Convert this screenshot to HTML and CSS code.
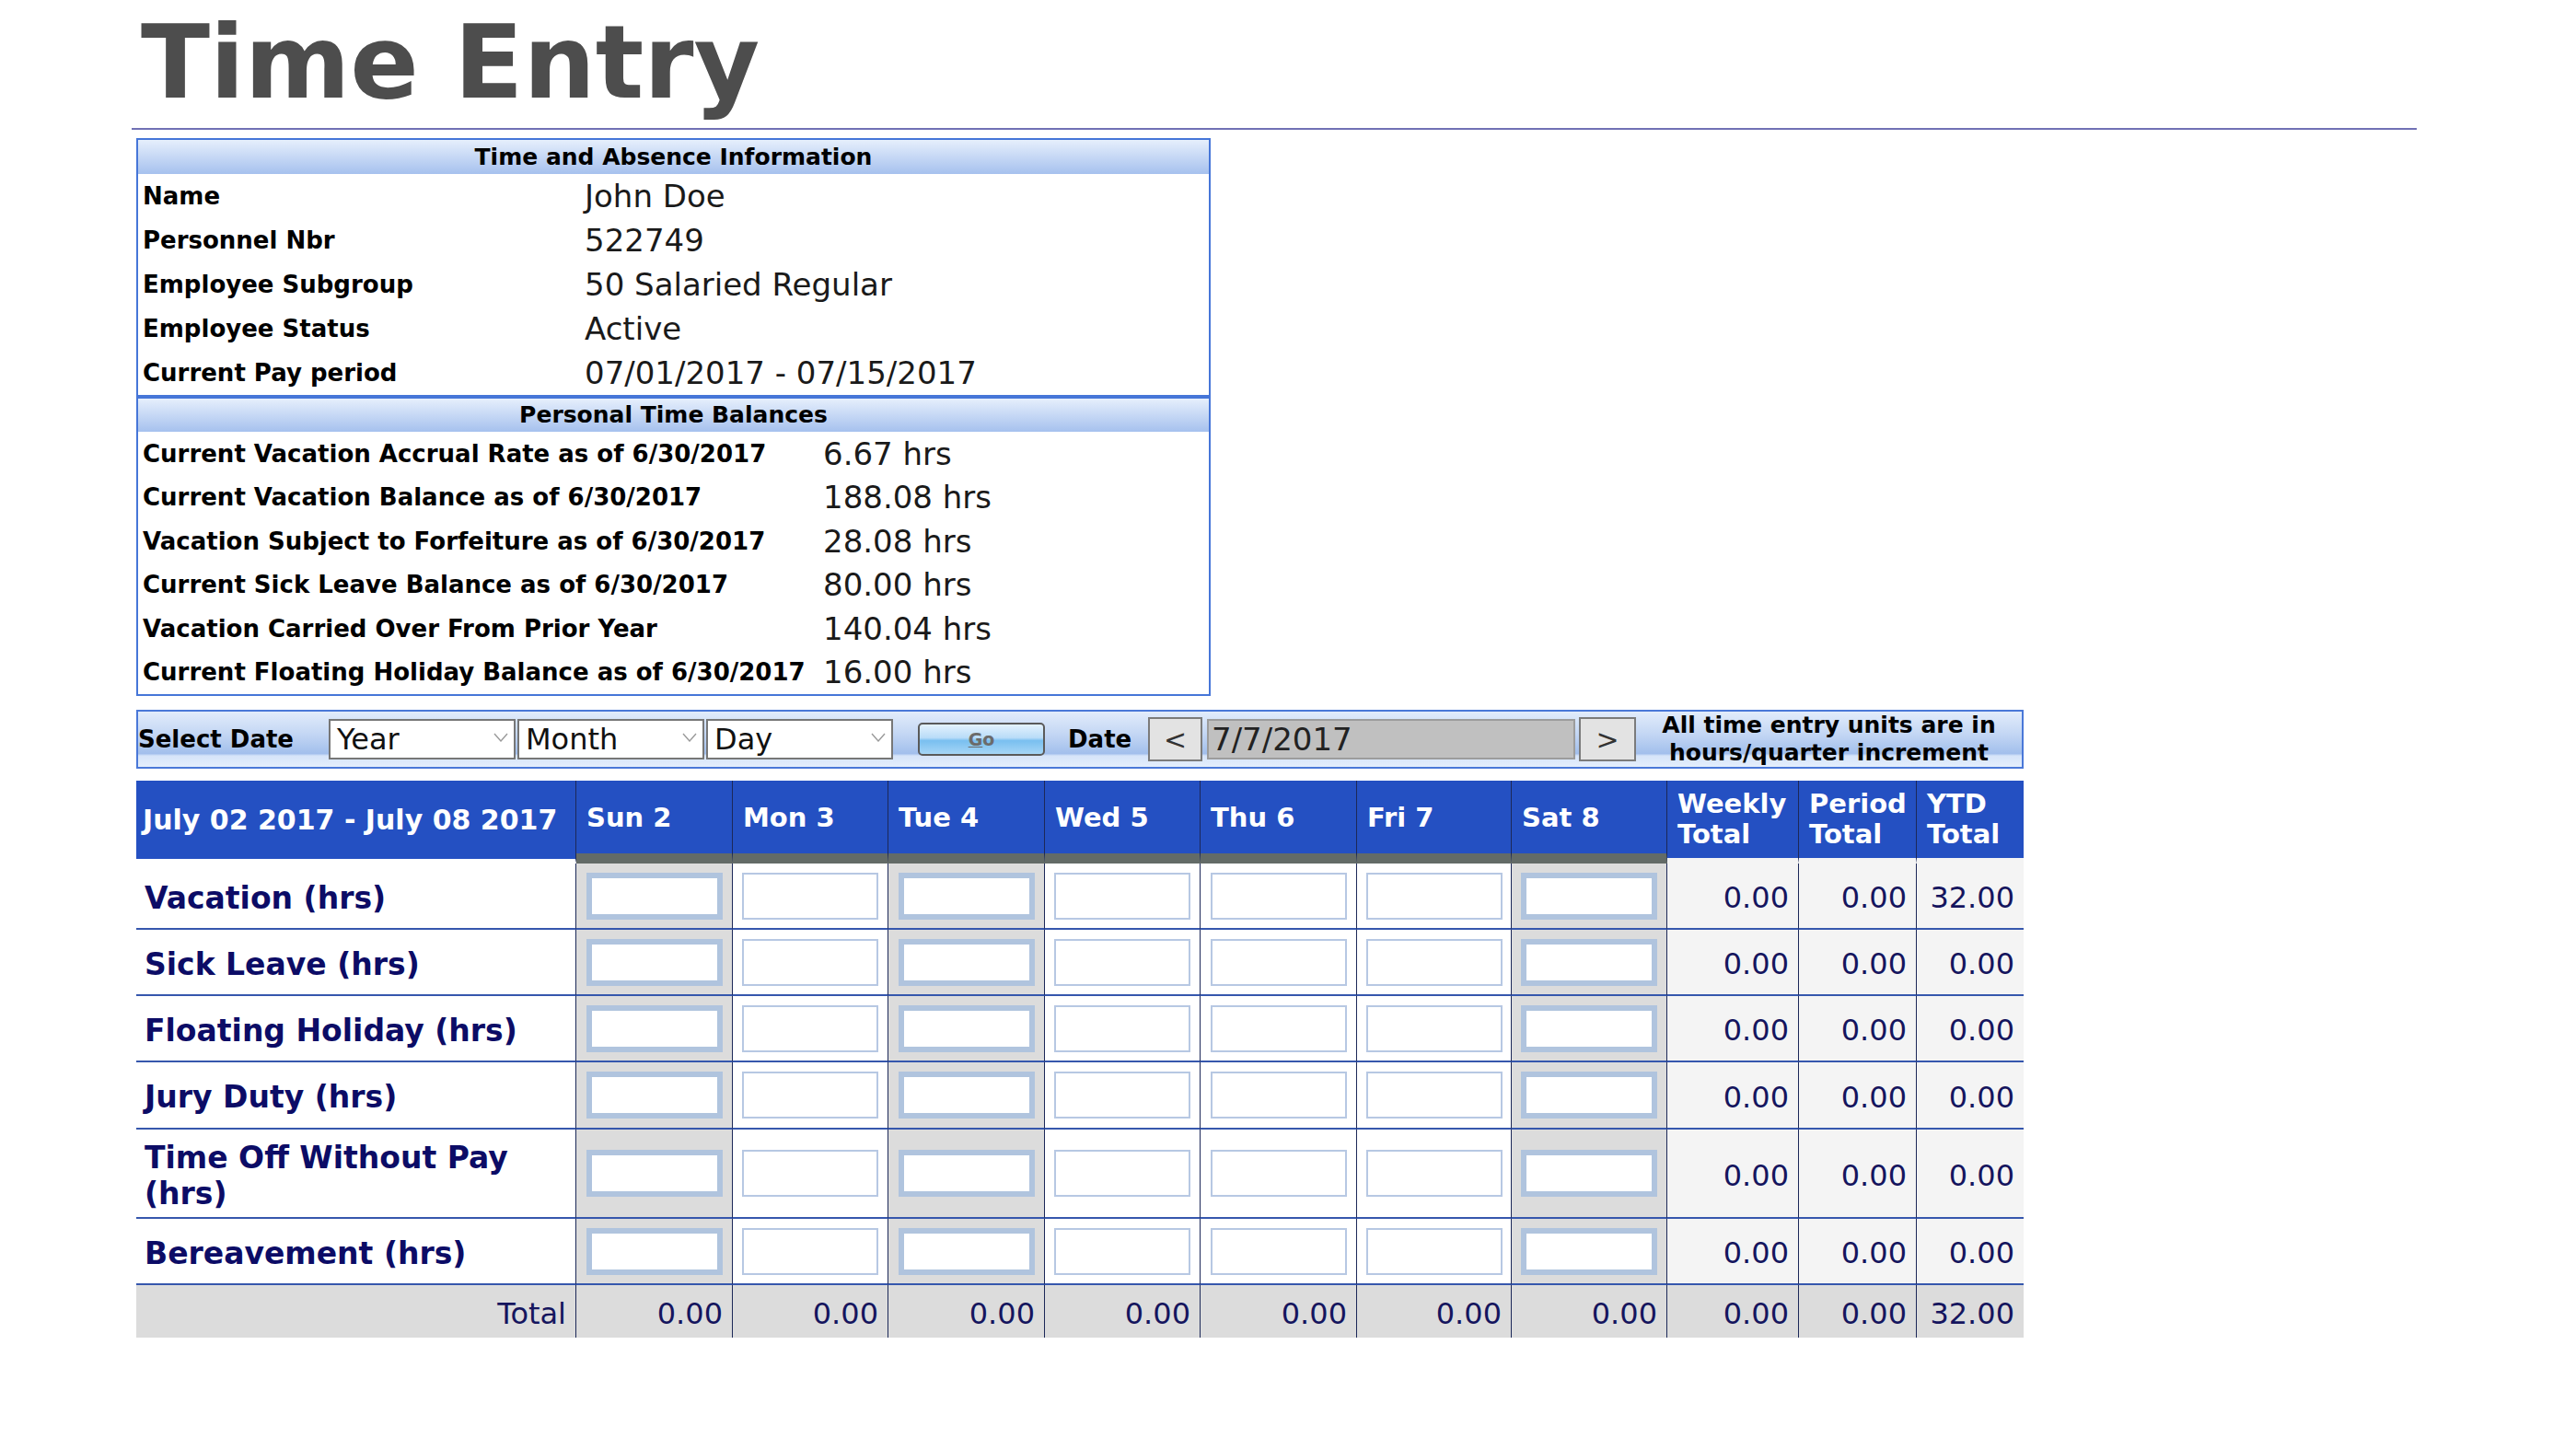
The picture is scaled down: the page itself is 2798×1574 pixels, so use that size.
FILE: index.html
```html
<!DOCTYPE html>
<html lang="en">
<head>
<meta charset="utf-8">
<title>Time Entry</title>
<link rel="stylesheet" href="styles.css">
</head>
<body>
<div class="page">
  <h1 class="title">Time Entry</h1>
  <div class="rule"></div>

  <div class="info">
    <section class="info-box">
      <div class="info-head">Time and Absence Information</div>
      <div class="info-grid info-grid--main">
        <div class="lbl">Name</div><div class="val">John Doe</div>
        <div class="lbl">Personnel Nbr</div><div class="val">522749</div>
        <div class="lbl">Employee Subgroup</div><div class="val">50 Salaried Regular</div>
        <div class="lbl">Employee Status</div><div class="val">Active</div>
        <div class="lbl">Current Pay period</div><div class="val">07/01/2017 - 07/15/2017</div>
      </div>
    </section>
    <section class="info-box info-box--second">
      <div class="info-head info-head--second">Personal Time Balances</div>
      <div class="info-grid info-grid--bal">
        <div class="lbl">Current Vacation Accrual Rate as of 6/30/2017</div><div class="val">6.67 hrs</div>
        <div class="lbl">Current Vacation Balance as of 6/30/2017</div><div class="val">188.08 hrs</div>
        <div class="lbl">Vacation Subject to Forfeiture as of 6/30/2017</div><div class="val">28.08 hrs</div>
        <div class="lbl">Current Sick Leave Balance as of 6/30/2017</div><div class="val">80.00 hrs</div>
        <div class="lbl">Vacation Carried Over From Prior Year</div><div class="val">140.04 hrs</div>
        <div class="lbl">Current Floating Holiday Balance as of 6/30/2017</div><div class="val">16.00 hrs</div>
      </div>
    </section>
  </div>

  <div class="datebar">
    <div class="db-label">Select Date</div>
    <div class="sel"><span>Year</span><svg class="chev" width="16" height="10" viewBox="0 0 16 10"><polyline points="1,1 8,9 15,1" fill="none" stroke="#9a9a9a" stroke-width="1.4"/></svg></div>
    <div class="sel"><span>Month</span><svg class="chev" width="16" height="10" viewBox="0 0 16 10"><polyline points="1,1 8,9 15,1" fill="none" stroke="#9a9a9a" stroke-width="1.4"/></svg></div>
    <div class="sel"><span>Day</span><svg class="chev" width="16" height="10" viewBox="0 0 16 10"><polyline points="1,1 8,9 15,1" fill="none" stroke="#9a9a9a" stroke-width="1.4"/></svg></div>
    <button class="go" type="button"><u>G</u>o</button>
    <div class="db-date">Date</div>
    <button class="nav-btn prev" type="button">&lt;</button>
    <div class="date-input">7/7/2017</div>
    <button class="nav-btn next" type="button">&gt;</button>
    <div class="db-note">All time entry units are in<br>hours/quarter increment</div>
  </div>

  <table class="entry">
    <colgroup>
      <col style="width:478px"><col style="width:170px"><col style="width:169px"><col style="width:170px"><col style="width:169px"><col style="width:170px"><col style="width:168px"><col style="width:169px"><col style="width:143px"><col style="width:128px"><col style="width:116px">
    </colgroup>
    <thead>
      <tr>
        <th class="th-label">July 02 2017 - July 08 2017</th>
        <th class="th-day">Sun 2</th>
        <th class="th-day">Mon 3</th>
        <th class="th-day">Tue 4</th>
        <th class="th-day">Wed 5</th>
        <th class="th-day">Thu 6</th>
        <th class="th-day">Fri 7</th>
        <th class="th-day">Sat 8</th>
        <th class="th-total">Weekly<br>Total</th>
        <th class="th-total">Period<br>Total</th>
        <th class="th-total">YTD<br>Total</th>
      </tr>
    </thead>
    <tbody>
      <tr>
        <td class="row-label">Vacation (hrs)</td>
        <td class="day off"><input class="hrs" type="text"></td>
        <td class="day"><input class="hrs" type="text"></td>
        <td class="day off"><input class="hrs" type="text"></td>
        <td class="day"><input class="hrs" type="text"></td>
        <td class="day"><input class="hrs" type="text"></td>
        <td class="day"><input class="hrs" type="text"></td>
        <td class="day off"><input class="hrs" type="text"></td>
        <td class="num">0.00</td><td class="num">0.00</td><td class="num">32.00</td>
      </tr>
      <tr>
        <td class="row-label">Sick Leave (hrs)</td>
        <td class="day off"><input class="hrs" type="text"></td>
        <td class="day"><input class="hrs" type="text"></td>
        <td class="day off"><input class="hrs" type="text"></td>
        <td class="day"><input class="hrs" type="text"></td>
        <td class="day"><input class="hrs" type="text"></td>
        <td class="day"><input class="hrs" type="text"></td>
        <td class="day off"><input class="hrs" type="text"></td>
        <td class="num">0.00</td><td class="num">0.00</td><td class="num">0.00</td>
      </tr>
      <tr>
        <td class="row-label">Floating Holiday (hrs)</td>
        <td class="day off"><input class="hrs" type="text"></td>
        <td class="day"><input class="hrs" type="text"></td>
        <td class="day off"><input class="hrs" type="text"></td>
        <td class="day"><input class="hrs" type="text"></td>
        <td class="day"><input class="hrs" type="text"></td>
        <td class="day"><input class="hrs" type="text"></td>
        <td class="day off"><input class="hrs" type="text"></td>
        <td class="num">0.00</td><td class="num">0.00</td><td class="num">0.00</td>
      </tr>
      <tr class="mid">
        <td class="row-label">Jury Duty (hrs)</td>
        <td class="day off"><input class="hrs" type="text"></td>
        <td class="day"><input class="hrs" type="text"></td>
        <td class="day off"><input class="hrs" type="text"></td>
        <td class="day"><input class="hrs" type="text"></td>
        <td class="day"><input class="hrs" type="text"></td>
        <td class="day"><input class="hrs" type="text"></td>
        <td class="day off"><input class="hrs" type="text"></td>
        <td class="num">0.00</td><td class="num">0.00</td><td class="num">0.00</td>
      </tr>
      <tr class="tall">
        <td class="row-label">Time Off Without Pay (hrs)</td>
        <td class="day off"><input class="hrs" type="text"></td>
        <td class="day"><input class="hrs" type="text"></td>
        <td class="day off"><input class="hrs" type="text"></td>
        <td class="day"><input class="hrs" type="text"></td>
        <td class="day"><input class="hrs" type="text"></td>
        <td class="day"><input class="hrs" type="text"></td>
        <td class="day off"><input class="hrs" type="text"></td>
        <td class="num">0.00</td><td class="num">0.00</td><td class="num">0.00</td>
      </tr>
      <tr>
        <td class="row-label">Bereavement (hrs)</td>
        <td class="day off"><input class="hrs" type="text"></td>
        <td class="day"><input class="hrs" type="text"></td>
        <td class="day off"><input class="hrs" type="text"></td>
        <td class="day"><input class="hrs" type="text"></td>
        <td class="day"><input class="hrs" type="text"></td>
        <td class="day"><input class="hrs" type="text"></td>
        <td class="day off"><input class="hrs" type="text"></td>
        <td class="num">0.00</td><td class="num">0.00</td><td class="num">0.00</td>
      </tr>
      <tr class="total-row">
        <td>Total</td>
        <td>0.00</td><td>0.00</td><td>0.00</td><td>0.00</td><td>0.00</td><td>0.00</td><td>0.00</td>
        <td>0.00</td><td>0.00</td><td>32.00</td>
      </tr>
    </tbody>
  </table>
</div>
</body>
</html>
```

FILE: styles.css
```css
* { box-sizing: border-box; }

html, body {
  margin: 0;
  padding: 0;
  background: #fff;
}

body {
  font-family: "DejaVu Sans", Verdana, sans-serif;
  color: #111;
}

.page {
  padding-left: 143px;
}

.title {
  margin: 0;
  padding: 13px 0 0 10px;
  font-size: 110px;
  line-height: 110px;
  font-weight: bold;
  color: #4d4d4d;
}

.rule {
  margin-top: 16px;
  width: 2482px;
  height: 2px;
  background: #7171b5;
}

/* ---------- info panel ---------- */
.info {
  margin: 9px 0 0 5px;
  width: 1167px;
}

.info-box {
  border: 2px solid #4676d8;
}

.info-head {
  height: 37px;
  background: linear-gradient(#e6effc, #c6d8f5 50%, #a6c1ee);
  font-weight: bold;
  font-size: 25px;
  line-height: 37px;
  text-align: center;
  color: #000;
}

.info-head--second {
  height: 36px;
  line-height: 36px;
}

.info-grid {
  display: grid;
}

.info-grid--main {
  grid-template-columns: 485px 1fr;
  grid-auto-rows: 48px;
}

.info-grid--bal {
  grid-template-columns: 744px 1fr;
  grid-auto-rows: 47.5px;
}

.lbl {
  display: flex;
  align-items: center;
  padding-left: 5px;
  font-weight: bold;
  font-size: 26px;
  white-space: nowrap;
  color: #000;
}

.val {
  display: flex;
  align-items: center;
  font-size: 34px;
  white-space: nowrap;
  color: #1a1a1a;
}

/* ---------- date bar ---------- */
.datebar {
  margin: 15px 0 0 5px;
  width: 2050px;
  height: 64px;
  border: 2px solid #4a78d8;
  background: linear-gradient(to bottom, #e2ecfb 0%, #c4d7f4 40%, #a2bfec 76%, #d6e4f9 80%, #e4eefc 100%);
  display: flex;
  align-items: center;
}

.db-label {
  width: 207px;
  font-weight: bold;
  font-size: 26px;
  color: #000;
}

.sel {
  width: 203px;
  height: 44px;
  border: 2px solid #777;
  background: #fff;
  display: flex;
  align-items: center;
  justify-content: space-between;
  padding: 0 6px 0 7px;
  font-size: 32px;
  color: #111;
}

.sel + .sel {
  margin-left: 2px;
}

.chev {
  margin-top: -4px;
}

.go {
  margin-left: 27px;
  width: 138px;
  height: 36px;
  border: 2px solid #5a5a5a;
  border-radius: 5px;
  background: linear-gradient(#e4f2fd, #b9dcf8 45%, #79bff0 55%, #a6d6f6);
  font-family: "DejaVu Sans", Verdana, sans-serif;
  font-weight: bold;
  font-size: 19px;
  color: #6b6b6b;
  padding: 0;
}

.db-date {
  margin-left: 25px;
  width: 87px;
  font-weight: bold;
  font-size: 26px;
  color: #000;
}

.nav-btn {
  width: 59px;
  height: 48px;
  border: 2px solid #7b7b7b;
  background: #e3e3e3;
  font-family: "DejaVu Sans", Verdana, sans-serif;
  font-size: 30px;
  color: #333;
  padding: 0;
}

.next {
  margin-left: 4px;
  width: 62px;
}

.date-input {
  margin-left: 5px;
  width: 400px;
  height: 44px;
  background: #c0c0c0;
  border: 2px solid #9c9c9c;
  font-size: 34px;
  line-height: 40px;
  padding-left: 3px;
  color: #222;
}

.db-note {
  flex: 1;
  text-align: center;
  font-weight: bold;
  font-size: 25px;
  line-height: 30px;
  color: #000;
}

/* ---------- entry table ---------- */
.entry {
  margin: 13px 0 0 5px;
  width: 2050px;
  border-collapse: separate;
  border-spacing: 0;
  table-layout: fixed;
}

.entry th,
.entry td {
  padding: 0;
  border-right: 1px solid #1c2858;
  vertical-align: middle;
}

.entry th:last-child,
.entry td:last-child {
  border-right: 0;
}

.entry thead th {
  height: 90px;
  background: #2450c2;
  color: #fff;
  font-weight: bold;
  font-size: 29px;
  text-align: left;
  padding-left: 11px;
  white-space: nowrap;
}

.entry thead th.th-label {
  padding-left: 7px;
  font-size: 30px;
  border-bottom: 5px solid #fff;
}

.entry thead th.th-day {
  border-bottom: 11px solid #636b67;
}

.entry thead th.th-total {
  border-bottom: 6px solid #f4f4f4;
  line-height: 33px;
}

.entry tbody td {
  height: 72px;
  border-bottom: 2px solid #3657ad;
}

.entry tbody tr.mid td {
  height: 73px;
}

.entry tbody tr.tall td {
  height: 97px;
}

.row-label {
  padding: 4px 10px 0 9px !important;
  font-weight: bold;
  font-size: 33px;
  line-height: 39px;
  color: #0c0c66;
}

.day {
  text-align: center;
}

.day.off {
  background: #dcdcdc;
}

.num {
  background: #f4f4f4;
  text-align: right;
  padding: 4px 10px 0 0 !important;
  font-size: 32px;
  color: #15155e;
}

.hrs {
  display: block;
  margin: 0 auto;
  width: 148px;
  height: 51px;
  padding: 0;
  background: #fff;
  border: 2px solid #b7c8e3;
  border-radius: 0;
  outline: none;
  font-size: 28px;
}

.off .hrs {
  border: 6px solid #b0c4de;
}

.entry tbody tr.total-row td {
  height: 57px;
  background: #dcdcdc;
  border-bottom: 0;
  text-align: right;
  padding: 4px 10px 0 0;
  font-size: 32px;
  color: #15155e;
}
```
